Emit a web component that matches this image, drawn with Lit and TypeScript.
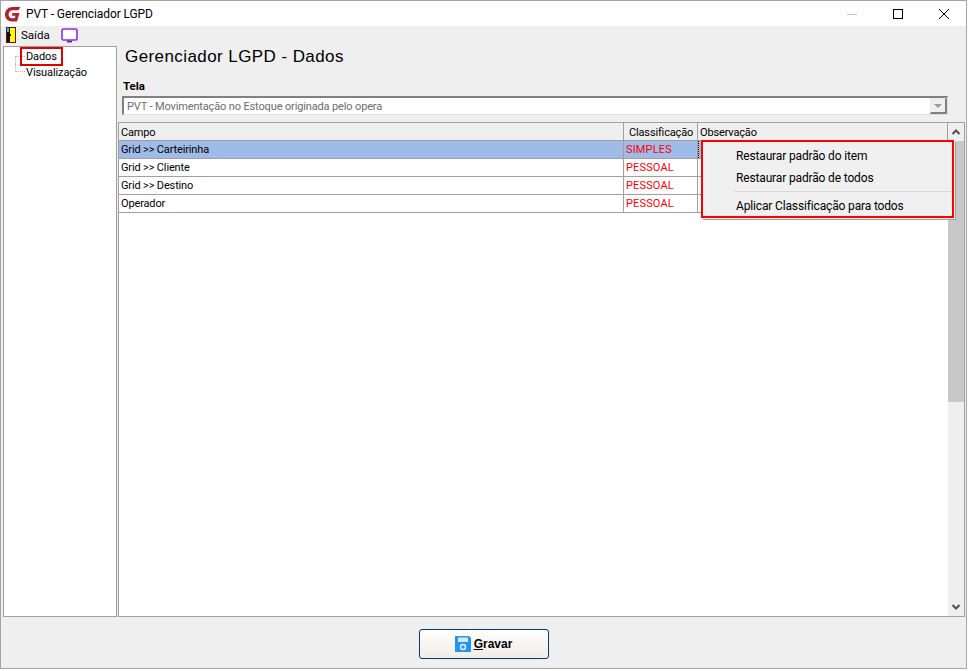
import { LitElement, css, html } from "lit";
import { customElement } from "lit/decorators.js";

const rows = [
  { campo: "Grid >> Carteirinha", cls: "SIMPLES", selected: true },
  { campo: "Grid >> Cliente", cls: "PESSOAL", selected: false },
  { campo: "Grid >> Destino", cls: "PESSOAL", selected: false },
  { campo: "Operador", cls: "PESSOAL", selected: false },
];

@customElement("app-root")
export class AppRoot extends LitElement {
  render() {
    return html`
      <div class="window">
        <div class="titlebar">
          <svg class="logo" width="16" height="16" viewBox="0 0 16 16">
            <path d="M15.5 1H7.5C3.2 1 0 4.2 0 8.5C0 12.6 3 15.5 7 15.5H12L14.5 7H7.5L6.8 9.8H10.5L9.8 12.3H7C5 12.3 3.6 10.8 3.6 8.5C3.6 6 5.2 4.2 7.4 4.2H13.5Z" fill="#b2212d"/>
          </svg>
          <span class="title">PVT - Gerenciador LGPD</span>
          <div class="caption">
            <svg width="46" height="26" viewBox="0 0 46 26"><path d="M19 13.5H29" stroke="#c4c4c4"/></svg>
            <svg width="46" height="26" viewBox="0 0 46 26"><rect x="19.5" y="8.5" width="9" height="9" fill="none" stroke="#000"/></svg>
            <svg width="46" height="26" viewBox="0 0 46 26"><path d="M19 8L29 18M29 8L19 18" stroke="#000"/></svg>
          </div>
        </div>
        <div class="toolbar">
          <svg class="door" width="10" height="16" viewBox="0 0 10 16">
            <rect width="10" height="16" fill="#6b1210"/>
            <rect x="1" y="1" width="3" height="14" fill="#111"/>
            <rect x="1" y="1" width="2" height="4" fill="#2ec4d6"/>
            <path d="M4 1H9V15H4Z" fill="#ffff00"/>
            <rect x="4" y="7" width="1" height="2" fill="#111"/>
          </svg>
          <span class="saida">Saída</span>
          <svg class="screen" width="18" height="15" viewBox="0 0 18 15">
            <rect x="1" y="1" width="15" height="11" rx="1.5" fill="#fff" stroke="#8f2be2" stroke-width="1.6"/>
            <path d="M6 13.5H11" stroke="#6a2aa8" stroke-width="2"/>
          </svg>
        </div>
        <div class="body">
          <div class="tree">
            <div class="node"><span class="dots top"></span><span class="mark">Dados</span></div>
            <div class="node"><span class="dots bottom"></span><span>Visualização</span></div>
          </div>
          <div class="main">
            <h1>Gerenciador LGPD - Dados</h1>
            <div class="label">Tela</div>
            <div class="combo">
              <span>PVT - Movimentação no Estoque originada pelo opera</span>
              <div class="drop"><i></i></div>
            </div>
            <div class="grid">
              <div class="table">
                <div class="row head">
                  <div class="c1">Campo</div><div class="c2">Classificação</div><div class="c3">Observação</div>
                </div>
                ${rows.map(
                  (r) => html`
                    <div class="row ${r.selected ? "sel" : ""}">
                      <div class="c1">${r.campo}</div><div class="c2 red">${r.cls}</div><div class="c3"></div>
                    </div>
                  `
                )}
              </div>
              <div class="scrollbar">
                <svg width="16" height="18" viewBox="0 0 16 18"><path d="M4.5 11L8 7.5L11.5 11" fill="none" stroke="#505050" stroke-width="2"/></svg>
                <div class="track"><div class="thumb"></div></div>
                <svg width="16" height="18" viewBox="0 0 16 18"><path d="M4.5 7L8 10.5L11.5 7" fill="none" stroke="#505050" stroke-width="2"/></svg>
              </div>
              <div class="menu">
                <div class="item">Restaurar padrão do item</div>
                <div class="item">Restaurar padrão de todos</div>
                <div class="sep"></div>
                <div class="item last">Aplicar Classificação para todos</div>
              </div>
            </div>
          </div>
        </div>
        <div class="footer">
          <button>
            <svg width="16" height="16" viewBox="0 0 16 16">
              <path d="M0 0H14L16 2V16H0Z" fill="#2196f3"/>
              <rect x="3" y="1.5" width="10" height="4.5" fill="#d6e6f3"/>
              <circle cx="8" cy="11" r="2.5" fill="none" stroke="#e6f1fa" stroke-width="1.5"/>
            </svg>
            <span><u>G</u>ravar</span>
          </button>
        </div>
      </div>
    `;
  }

  static styles = css`
    :host {
      display: block;
      width: 968px;
      height: 671px;
      font-family: Roboto, "Liberation Sans", Arial, sans-serif;
      font-size: 11px;
      color: #000;
      background: #fff;
    }
    .window {
      box-sizing: border-box;
      width: 967px;
      height: 669px;
      border: 1px solid #a5a5a5;
      background: #efefef;
      display: flex;
      flex-direction: column;
    }
    .titlebar {
      height: 25px;
      background: #fff;
      display: flex;
      align-items: center;
      padding-left: 4px;
      flex: none;
    }
    .logo {
      margin-right: 5px;
    }
    .title {
      font-size: 12px;
      letter-spacing: -0.1px;
    }
    .caption {
      margin-left: auto;
      display: flex;
    }
    .toolbar {
      height: 18px;
      flex: none;
      display: flex;
      align-items: center;
      padding-left: 5px;
      font-size: 11.5px;
    }
    .saida {
      margin-left: 5px;
    }
    .screen {
      margin-left: 11px;
    }
    .body {
      flex: 1;
      display: flex;
      min-height: 0;
      padding-left: 2px;
      padding-top: 2px;
    }
    .tree {
      box-sizing: border-box;
      width: 114px;
      background: #fff;
      border: 1px solid #a0a0a0;
      padding-top: 1px;
      flex: none;
    }
    .node {
      height: 16px;
      display: flex;
      align-items: center;
      font-size: 11px;
      letter-spacing: -0.1px;
    }
    .dots {
      box-sizing: border-box;
      width: 10px;
      height: 8px;
      margin-left: 11px;
      margin-right: 1px;
      border-left: 1px dotted #b4b4b4;
    }
    .dots.top {
      align-self: flex-end;
      border-top: 1px dotted #b4b4b4;
    }
    .dots.bottom {
      align-self: flex-start;
      border-bottom: 1px dotted #b4b4b4;
    }
    .mark {
      outline: 2px solid #e00000;
      padding: 0 4px;
      margin-left: -4px;
      line-height: 15px;
    }
    .main {
      flex: 1;
      min-width: 0;
      display: flex;
      flex-direction: column;
      padding-left: 1px;
    }
    h1 {
      margin: 0;
      font-family: "Liberation Sans", Arial, sans-serif;
      font-weight: 400;
      font-size: 17px;
      letter-spacing: 0.42px;
      line-height: 20px;
      padding: 1px 0 0 7px;
    }
    .label {
      font-weight: 700;
      font-size: 11.5px;
      padding: 12px 0 0 5px;
      line-height: 14px;
    }
    .combo {
      box-sizing: border-box;
      height: 19px;
      margin: 3px 18px 0 4px;
      background: #fff;
      border: 2px solid #808080;
      border-right: 1px solid #e0e0e0;
      border-bottom: 1px solid #e0e0e0;
      display: flex;
      align-items: center;
      color: #6d6d6d;
      padding-left: 3px;
      font-size: 11px;
      letter-spacing: -0.14px;
      flex: none;
    }
    .drop {
      margin-left: auto;
      box-sizing: border-box;
      width: 17px;
      height: 16px;
      background: #efefef;
      border: 1px solid #e8e8e8;
      border-right: 2px solid #808080;
      border-bottom: 2px solid #808080;
      display: flex;
      align-items: center;
      justify-content: center;
    }
    .drop i {
      width: 0;
      height: 0;
      border-left: 4px solid transparent;
      border-right: 4px solid transparent;
      border-top: 4px solid #9a9a9a;
    }
    .grid {
      box-sizing: border-box;
      flex: 1;
      min-height: 0;
      margin-top: 7px;
      margin-right: 1px;
      display: flex;
      background: #fff;
      border: 1px solid #a0a0a0;
      position: relative;
    }
    .table {
      flex: 1;
      min-width: 0;
    }
    .row {
      display: flex;
      height: 18px;
      box-sizing: border-box;
      border-bottom: 1px solid #a0a0a0;
      line-height: 18px;
      font-size: 11px;
      letter-spacing: -0.15px;
    }
    .row > div {
      box-sizing: border-box;
      border-right: 1px solid #a0a0a0;
      padding-left: 2px;
      white-space: nowrap;
      overflow: hidden;
    }
    .head {
      background: #efefef;
      line-height: 19px;
    }
    .sel {
      background: #9fbbe8;
    }
    .c1 {
      width: 505px;
    }
    .c2 {
      width: 74px;
    }
    .head .c2 {
      padding-left: 5px;
    }
    .c3 {
      flex: 1;
    }
    .row:not(.head) .c3 {
      border-right: none;
    }
    .sel .c3 {
      border-left: 1px dotted #000;
    }
    .red {
      color: #f00;
      letter-spacing: 0.15px;
    }
    .scrollbar {
      width: 16px;
      flex: none;
      display: flex;
      flex-direction: column;
      background: #efefef;
    }
    .track {
      flex: 1;
    }
    .thumb {
      height: 261px;
      background: #c8c8c8;
    }
    .menu {
      position: absolute;
      left: 582px;
      top: 17px;
      width: 253px;
      box-sizing: border-box;
      background: #f0f0f0;
      border: 2px solid #f00;
      box-shadow: 1px 1px 0 #f0f0f0, 2px 2px 0 #a0a0a0;
      font-size: 12px;
      letter-spacing: -0.15px;
      padding: 3px 0 0;
      z-index: 1;
    }
    .item {
      height: 22px;
      line-height: 22px;
      padding-left: 33px;
    }
    .item.last {
      height: 21px;
    }
    .sep {
      height: 1px;
      background: #d7d7d7;
      margin: 2px 0 3px 31px;
    }
    .footer {
      height: 51px;
      flex: none;
      display: flex;
      justify-content: center;
      align-items: flex-start;
      padding-top: 12px;
      box-sizing: border-box;
    }
    button {
      width: 130px;
      height: 30px;
      border: 1px solid #003c74;
      border-radius: 3px;
      background: linear-gradient(#ffffff, #f0ece8);
      display: flex;
      align-items: center;
      justify-content: center;
      gap: 3px;
      font-family: "Liberation Sans", Arial, sans-serif;
      font-size: 12px;
      font-weight: 700;
      padding: 0;
    }
  `;
}
